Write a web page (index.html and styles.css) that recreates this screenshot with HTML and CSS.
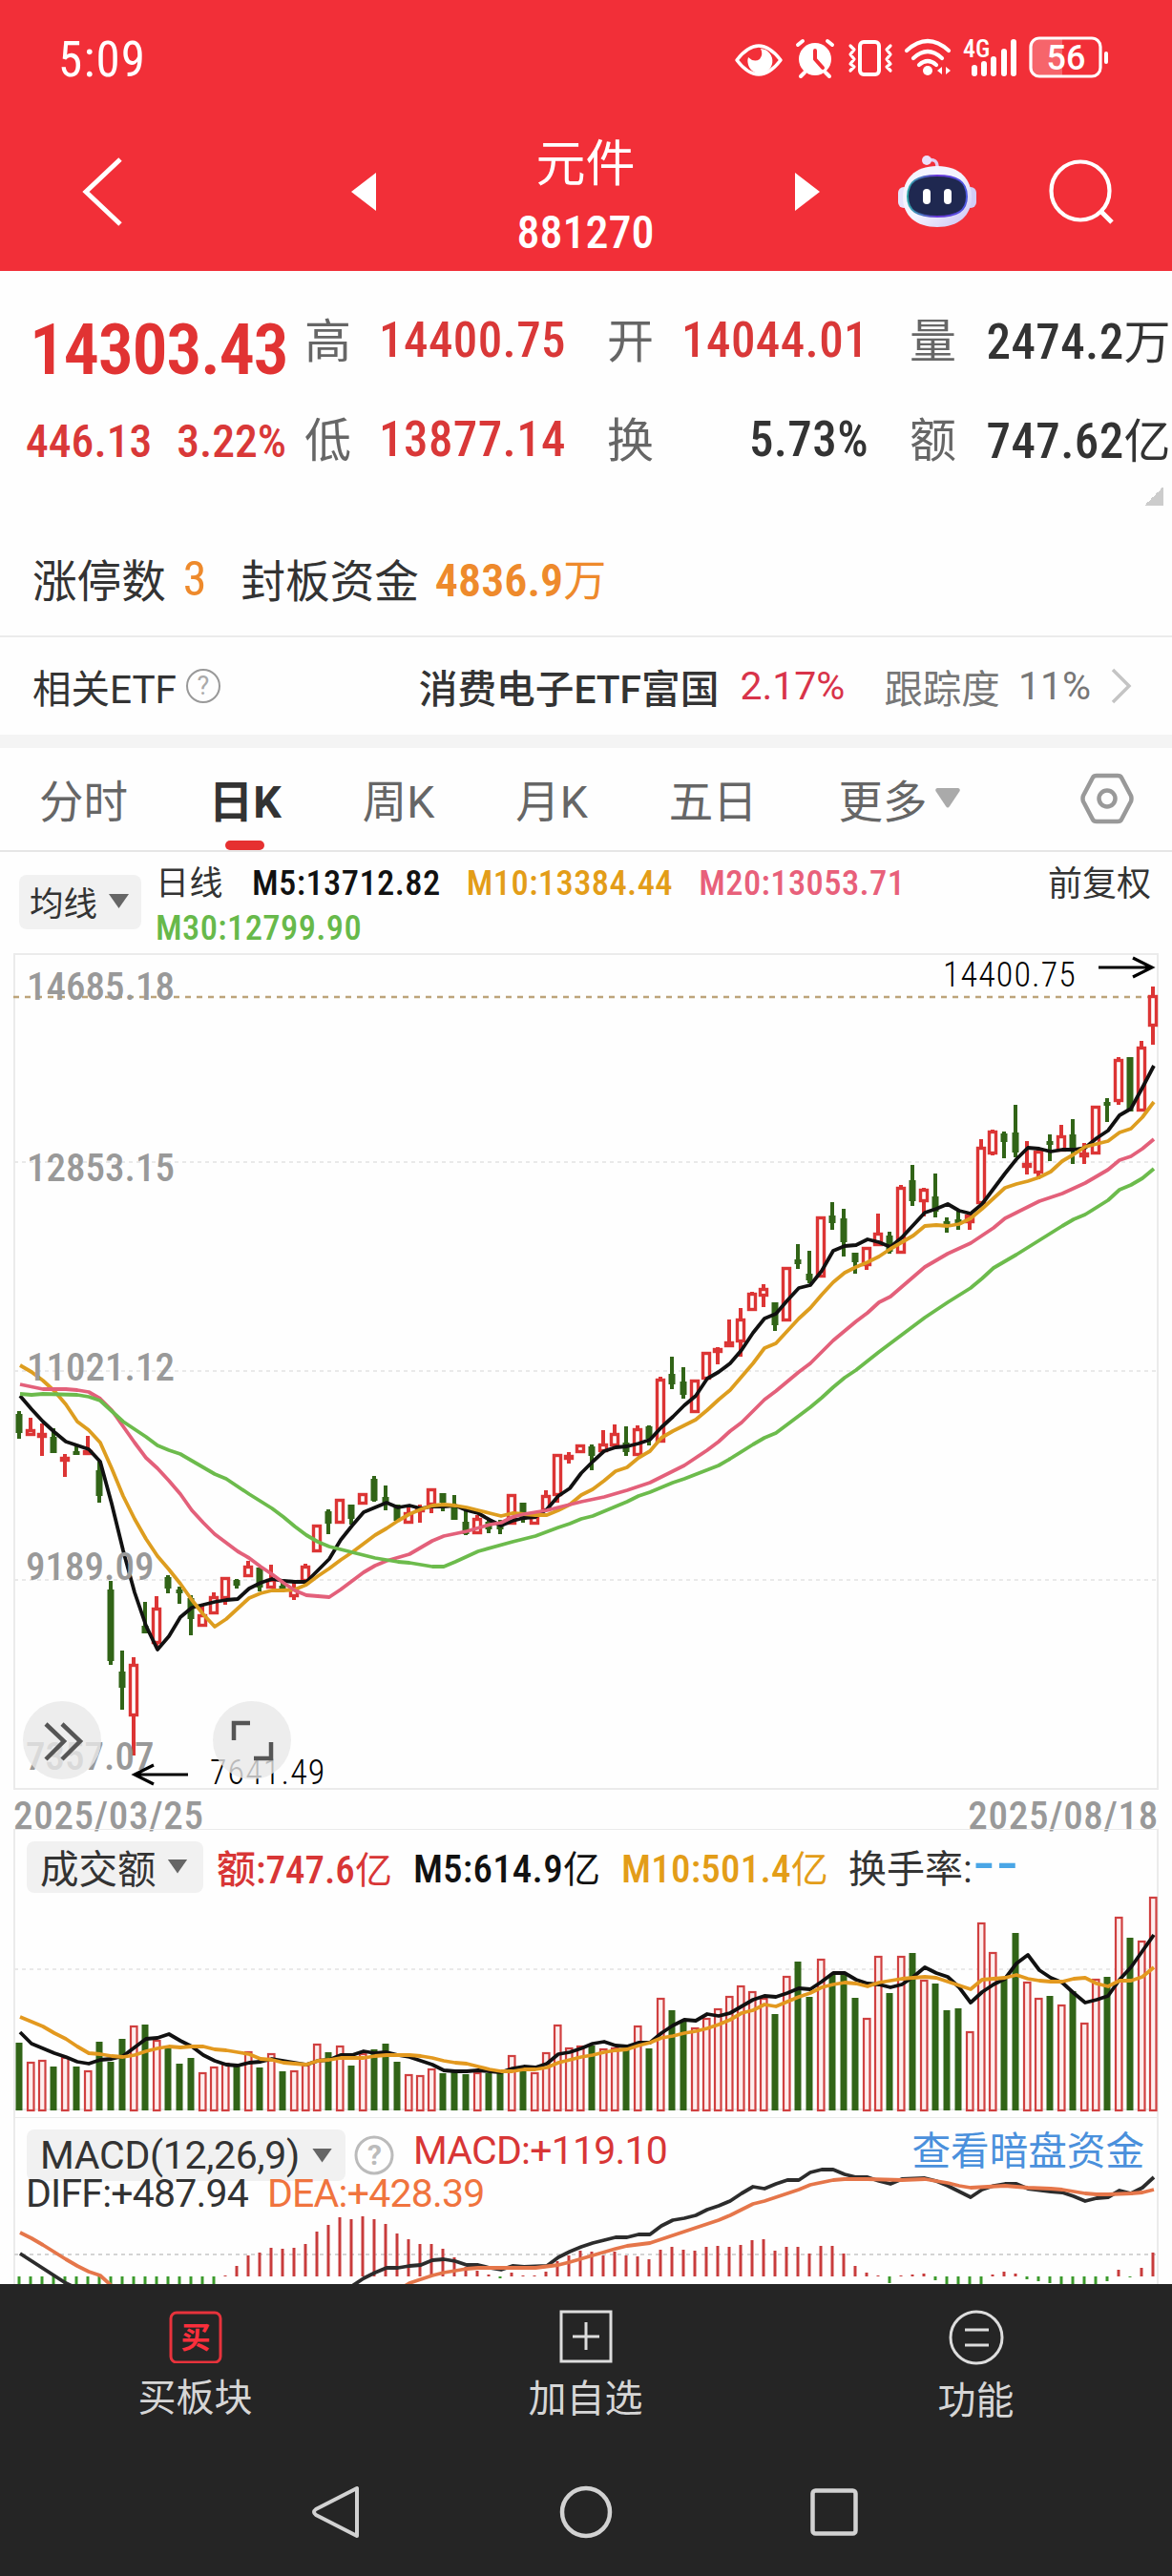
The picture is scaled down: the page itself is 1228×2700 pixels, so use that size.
FILE: index.html
```html
<!DOCTYPE html>
<html lang="zh-CN">
<head>
    <meta charset="UTF-8">
    <meta name="viewport" content="width=device-width, initial-scale=1.0">
    <title>元件 881270</title>
    <link rel="stylesheet" href="styles.css">
</head>
<body>
    <header class="top">
        <div class="status">
            <span class="clock">5:09</span>
            <svg class="status-icons" width="400" height="50" viewBox="0 0 400 50" fill="none" stroke="#fff" stroke-linecap="round" stroke-linejoin="round">
                <path d="M2 23Q25 -7 48 23Q25 53 2 23Z" transform="translate(0 1)" stroke-width="3.5"/>
                <path d="M27 12A13 13 0 1 1 14 21Q20 27 26 23Q30 18 27 12Z" fill="#fff" stroke="none"/>
                <circle cx="84" cy="23" r="17" fill="#fff" stroke="none"/>
                <path d="M66 8l5 -4M102 8l-5 -4M73 37l-4 4M95 37l4 4" stroke-width="4"/>
                <path d="M84 14v9l8 9" stroke="#f22f38" stroke-width="4"/>
                <rect x="131" y="5" width="20" height="34" rx="4" stroke-width="4"/>
                <path d="M121 9l4 4l-4 5l4 5l-4 5l4 3l-4 4M163 9l-4 4l4 5l-4 5l4 5l-4 3l4 4" stroke-width="3.2"/>
                <path d="M180 14Q202 -6 224 14M187 22Q202 8 217 22M193 29Q202 21 211 29" stroke-width="4.2"/>
                <circle cx="202" cy="35" r="5" fill="#fff" stroke="none"/>
                <path d="M217 31v8l-5 -4zM221 39v-8l5 4z" fill="#fff" stroke="none"/>
                <path d="M251 32v6M261 28v10M271 23v15M282 15v23M292 5v33" stroke-width="6"/>
                <text x="239" y="21" class="net">4G</text>
                <path d="M320 2h23v38h-23a9 9 0 0 1-9-9v-20a9 9 0 0 1 9-9z" fill="#f6656b" stroke="none"/>
                <rect x="310" y="1" width="73" height="40" rx="9" stroke-width="3.2"/>
                <path d="M389 17v9" stroke-width="4"/>
                <text x="347" y="34" text-anchor="middle" class="battery">56</text>
            </svg>
        </div>
        <div class="nav">
            <svg class="back" width="46" height="76" viewBox="0 0 46 76" fill="none" stroke="#fff" stroke-width="5"><path d="M42 4L6 38L42 72"/></svg>
            <svg class="prev" width="26" height="40" viewBox="0 0 26 40"><path d="M26 0V40L0 20Z" fill="#fff"/></svg>
            <div class="title">
                <h1>元件</h1>
                <span>881270</span>
            </div>
            <svg class="next" width="26" height="40" viewBox="0 0 26 40"><path d="M0 0V40L26 20Z" fill="#fff"/></svg>
            <svg class="robot" width="82" height="76" viewBox="0 0 82 76">
                <defs>
                    <linearGradient id="shell" x1="0" y1="0" x2="1" y2="1">
                        <stop offset="0" stop-color="#f3f5ff"/><stop offset=".5" stop-color="#f5f3ff"/><stop offset="1" stop-color="#c9c2f3"/>
                    </linearGradient>
                    <linearGradient id="rim" x1="0" y1="0" x2="1" y2="0">
                        <stop offset="0" stop-color="#2fa7a8"/><stop offset=".5" stop-color="#6a35d8"/><stop offset="1" stop-color="#4b58e0"/>
                    </linearGradient>
                </defs>
                <path d="M30 5Q42 2 41 14" fill="none" stroke="#e4cdf0" stroke-width="3.5"/>
                <circle cx="30" cy="5" r="5" fill="#ece0fa"/>
                <rect x="0" y="33" width="12" height="22" rx="6" fill="#e6e3fb"/>
                <rect x="70" y="33" width="12" height="22" rx="6" fill="#d2cdf6"/>
                <path d="M41 11C65 11 77 25 77 44C77 63 63 75 41 75C19 75 5 63 5 44C5 25 17 11 41 11Z" fill="url(#shell)"/>
                <path d="M41 21C62 21 72 27 72 43C72 58 62 64 41 64C20 64 10 58 10 43C10 27 20 21 41 21Z" fill="#1f2850" stroke="url(#rim)" stroke-width="2"/>
                <rect x="26" y="35" width="8" height="16" rx="4" fill="#fff"/>
                <rect x="48" y="35" width="8" height="16" rx="4" fill="#fff"/>
            </svg>
            <svg class="search" width="70" height="70" viewBox="0 0 70 70" fill="none" stroke="#fff" stroke-width="4.2"><circle cx="33" cy="34" r="30.5"/><path d="M54 55L66 67" stroke-width="5"/></svg>
        </div>
    </header>

    <section class="quote">
        <div class="price">14303.43</div>
        <div class="pair"><label>高</label><b class="up">14400.75</b></div>
        <div class="pair"><label>开</label><b class="up">14044.01</b></div>
        <div class="pair"><label>量</label><b>2474.2<i>万</i></b></div>
        <div class="change"><span>446.13</span><span>3.22%</span></div>
        <div class="pair"><label>低</label><b class="up">13877.14</b></div>
        <div class="pair"><label>换</label><b>5.73%</b></div>
        <div class="pair"><label>额</label><b>747.62<i>亿</i></b></div>
    </section>
    <div class="fold"></div>

    <section class="limit">
        <span>涨停数</span><span class="limit-count">3</span>
        <span>封板资金</span><span class="limit-money">4836.9<i>万</i></span>
    </section>

    <section class="etf">
        <span class="etf-title">相关ETF</span>
        <svg class="help" width="38" height="38" viewBox="0 0 38 38"><circle cx="19" cy="19" r="17" fill="none" stroke="#999" stroke-width="2"/><text x="19" y="28" text-anchor="middle">?</text></svg>
        <span class="etf-name">消费电子ETF富国</span>
        <span class="etf-rate">2.17%</span>
        <span class="etf-track">跟踪度</span>
        <span class="etf-pct">11%</span>
        <svg class="more" width="22" height="38" viewBox="0 0 22 38" fill="none" stroke="#c4c4c4" stroke-width="3.5"><path d="M2 2L19 19L2 36"/></svg>
    </section>

    <nav class="tabs">
        <span>分时</span>
        <span class="active">日K</span>
        <span>周K</span>
        <span>月K</span>
        <span>五日</span>
        <span class="tab-more">更多<svg width="26" height="21" viewBox="0 0 26 21"><path d="M2 0H24Q27 1 25 4L15 19Q13 22 11 19L1 4Q-1 1 2 0Z" fill="#aaa"/></svg></span>
        <svg class="settings" width="56" height="54" viewBox="0 0 56 54" fill="none" stroke="#999" stroke-width="4.5" stroke-linejoin="round"><path d="M17 3H39Q42 3 43 5L53 24Q54 27 53 30L43 49Q42 51 39 51H17Q14 51 13 49L3 30Q2 27 3 24L13 5Q14 3 17 3Z"/><circle cx="28" cy="27" r="8.5"/></svg>
    </nav>

    <section class="ma">
        <button class="pick pick-ma">均线<i class="caret"></i></button>
        <div class="ma-list">
            <span class="ma-name">日线</span>
            <span class="m5">M5:13712.82</span>
            <span class="m10">M10:13384.44</span>
            <span class="m20">M20:13053.71</span>
            <span class="m30">M30:12799.90</span>
        </div>
        <span class="adjust">前复权</span>
    </section>

    <section class="kline">
        <svg id="kline" width="1228" height="876" viewBox="0 0 1228 876">
            <rect x="15" y="0" width="1198" height="875" fill="none" stroke="#ebebeb" stroke-width="2"/>
            <path class="grid" d="M15 218H1212M15 437H1212M15 656H1212"/>
            <path class="last" d="M14 45H1204"/>
            <g class="lines"></g>
            <g class="axis">
                <text x="28" y="48">14685.18</text>
                <text x="28" y="238">12853.15</text>
                <text x="28" y="447">11021.12</text>
                <text x="27" y="656">9189.09</text>
                <text x="27" y="855">7357.07</text>
            </g>
            <g class="mark">
                <path d="M1151 14H1207M1187 4L1207 14L1187 24"/>
                <text x="988" y="34">14400.75</text>
                <path d="M197 860H141M161 850L141 860L161 870"/>
                <text x="220" y="870">7641.49</text>
            </g>
        </svg>
        <svg class="float expand" width="82" height="82" viewBox="0 0 82 82"><circle cx="41" cy="41" r="41"/><path d="M24 24L43 42L24 61M41 24L60 42L41 61"/></svg>
        <svg class="float full" width="82" height="82" viewBox="0 0 82 82"><circle cx="41" cy="41" r="41"/><path d="M22 41V23H39M43 60H61V43"/></svg>
    </section>
    <div class="dates"><span>2025/03/25</span><span>2025/08/18</span></div>

    <section class="volume">
        <svg id="volume" width="1228" height="302" viewBox="0 0 1228 302">
            <path d="M15 302V0H1213V302M15 294H1213" fill="none" stroke="#ebebeb" stroke-width="2"/>
            <path class="grid" d="M15 147H1212"/>
            <g class="lines"></g>
        </svg>
        <div class="panel-head">
            <button class="pick pick-vol">成交额<i class="caret"></i></button>
            <span class="amount">额:747.6<i>亿</i></span>
            <span class="m5">M5:614.9<i>亿</i></span>
            <span class="m10">M10:501.4<i>亿</i></span>
            <span class="turnover">换手率:</span><span class="dash">--</span>
        </div>
    </section>

    <section class="macd">
        <svg id="macd" width="1228" height="175" viewBox="0 0 1228 175">
            <path d="M15 176V0H1213V176" fill="none" stroke="#ebebeb" stroke-width="2"/>
            <path class="grid grid-dark" d="M15 144H1212"/>
            <g class="lines"></g>
        </svg>
        <div class="macd-head">
            <button class="pick pick-macd">MACD(12,26,9)<i class="caret"></i></button>
            <svg class="help help-bold" width="42" height="42" viewBox="0 0 42 42"><circle cx="21" cy="21" r="19" fill="none" stroke="#bbb" stroke-width="3"/><text x="21" y="31" text-anchor="middle">?</text></svg>
            <span class="macd-val">MACD:+119.10</span>
            <a class="dark-pool">查看暗盘资金</a>
        </div>
        <div class="macd-sub"><span class="diff">DIFF:+487.94</span><span class="dea">DEA:+428.39</span></div>
    </section>

    <footer class="bottom">
        <div class="actions">
            <div class="action">
                <svg width="56" height="56" viewBox="0 0 56 56"><rect x="2" y="3" width="52" height="52" rx="6" fill="none" stroke="#e8333c" stroke-width="3"/><text x="28" y="40" text-anchor="middle" class="buy">买</text></svg>
                <span class="buy-label">买板块</span>
            </div>
            <div class="action">
                <svg width="56" height="56" viewBox="0 0 56 56" fill="none" stroke="#ddd" stroke-width="3"><path d="M2 2H54V54H2ZM28 13V42M14 28H42"/></svg>
                <span>加自选</span>
            </div>
            <div class="action">
                <svg width="58" height="58" viewBox="0 0 58 58" fill="none" stroke="#ddd" stroke-width="3"><circle cx="29" cy="29" r="27"/><path d="M17 21H42M17 37H42"/></svg>
                <span>功能</span>
            </div>
        </div>
        <div class="system">
            <svg width="52" height="58" viewBox="0 0 52 58" fill="none" stroke="#d2d2d2" stroke-width="4" stroke-linejoin="round"><path d="M47 4V54L4 32Q0 29 4 26Z"/></svg>
            <svg width="56" height="56" viewBox="0 0 56 56" fill="none" stroke="#d2d2d2" stroke-width="4.5"><circle cx="28" cy="28" r="25"/></svg>
            <svg width="50" height="50" viewBox="0 0 50 50" fill="none" stroke="#d2d2d2" stroke-width="4.5"><rect x="2.5" y="2.5" width="45" height="45" rx="3"/></svg>
        </div>
    </footer>

    <script src="chart.js"></script>
</body>
</html>
```
FILE: chart.js
```js
const STEP = 12;
const START = 20;
const RED = '#dc3535';
const GREEN = '#316417';

// r/g, high, body top, body bottom, low
const candles = `g 479 482 502 508|r 486 498 505 505|r 492 502 507 526|g 497 506 523 523|r 524 527 532 548|g 515 521 524 525|r 505 520 525 525|g 532 541 568 575|g 657 666 741 745|g 730 752 769 792
r 737 744 799 840|g 679 704 712 712|r 673 685 723 725|g 651 653 665 670|g 663 666 670 681|g 672 675 697 714|r 683 692 705 705|r 669 673 692 692|r 653 653 676 682|g 655 656 662 665
r 636 641 653 653|g 643 643 664 668|r 640 655 665 665|g 658 662 668 668|r 657 664 674 677|r 639 641 658 658|r 598 598 627 627|g 582 584 597 608|r 571 571 597 597|g 577 577 592 598
r 565 565 577 577|g 547 550 573 574|g 557 569 575 583|g 577 577 594 594|r 578 585 597 597|r 577 580 585 596|r 560 560 578 586|g 565 565 575 584|g 567 577 593 593|g 583 595 608 609
r 588 591 608 608|g 593 595 603 607|g 593 598 603 608|r 566 566 598 598|g 575 575 593 596|r 588 589 598 598|r 562 567 584 584|r 524 524 568 575|r 522 525 529 534|r 514 514 523 523
g 514 516 526 541|r 499 513 522 522|r 493 502 516 516|g 495 512 522 526|r 494 497 526 526|g 494 495 508 515|r 443 445 512 512|g 422 440 451 456|g 433 448 462 466|r 446 446 481 481
r 417 417 446 446|r 412 413 417 430|r 383 406 412 412|r 371 382 407 422|r 354 355 374 374|r 346 350 359 370|g 365 365 389 395|r 328 328 385 385|g 304 320 325 330|g 311 335 342 345
r 275 275 339 339|g 260 274 282 289|g 267 277 302 317|g 313 313 323 335|r 307 307 327 331|r 272 292 306 306|g 291 295 312 314|r 242 244 314 314|g 221 237 259 264|r 245 246 260 275
g 230 254 270 276|g 276 280 283 292|g 268 278 281 289|r 272 273 282 289|r 194 202 262 262|r 184 185 210 211|g 186 188 197 214|g 158 187 208 213|r 196 219 223 231|r 205 206 230 236
g 189 196 200 217|r 179 190 207 207|g 173 189 206 220|r 198 208 212 220|r 159 159 210 210|g 151 155 158 176|r 108 110 155 158|g 108 108 165 165|r 91 97 165 165|r 34 43 76 95`
    .split(/[|\n]/).map(row => row.split(' '));

const ma5 = [463,477,490,501,511,515,519,532,576,625,669,704,729,715,695,685,682,679,677,676,665,659,655,657,658,658,646,634,614,599,585,580,575,580,578,581,579,579,578,583,586,593,599,594,591,590,582,568,560,544,532,521,517,516,513,509,496,485,473,463,445,438,429,415,397,382,377,363,350,347,332,311,306,305,299,302,307,297,284,271,267,262,269,272,262,246,230,215,203,204,207,205,205,203,193,185,169,162,140,117];
const ma10 = [431,438,447,458,472,490,499,512,539,568,592,613,631,645,660,677,692,705,697,686,675,670,667,667,666,661,652,644,635,627,618,609,602,594,587,582,578,577,578,580,583,586,589,586,587,588,588,583,577,567,561,552,542,538,528,521,507,500,494,488,478,467,457,443,429,413,408,395,382,371,357,344,334,328,323,317,309,302,295,285,284,285,283,277,267,256,245,241,238,234,228,217,210,202,199,196,187,183,171,155];
// slower averages are nearly straight between these [index, y] points
const ma20 = [[0,451],[2,456],[4,456],[5,457],[6,459],[7,466],[8,478],[9,495],[10,512],[11,528],[12,539],[13,552],[14,566],[15,583],[16,596],[17,608],[18,617],[19,626],[20,633],[21,642],[22,650],[23,659],[24,667],[25,672],[26,673],[27,674],[28,666],[29,657],[30,648],[31,641],[32,636],[34,629],[36,615],[37,610],[39,605],[41,598],[42,596],[43,590],[44,587],[46,583],[48,577],[49,574],[51,569],[53,562],[55,554],[57,542],[58,536],[59,528],[60,520],[61,511],[62,500],[63,491],[64,479],[65,467],[66,458],[67,448],[68,438],[69,429],[70,417],[71,405],[73,385],[74,376],[75,365],[76,359],[79,328],[81,314],[83,303],[85,287],[86,277],[87,271],[89,259],[91,251],[93,240],[95,226],[96,216],[97,212],[98,204],[99,194]];
const ma30 = [[0,461],[1,462],[2,461],[5,462],[6,464],[7,468],[8,479],[9,490],[10,498],[11,506],[12,515],[13,520],[14,524],[17,545],[18,550],[20,566],[22,581],[23,590],[24,600],[25,609],[26,616],[27,621],[29,627],[31,633],[33,637],[34,638],[36,642],[37,642],[38,637],[40,626],[43,616],[45,610],[47,601],[48,597],[49,592],[50,589],[52,579],[53,574],[54,568],[55,564],[57,554],[58,550],[61,536],[62,529],[64,514],[65,507],[66,502],[69,475],[70,465],[71,454],[72,444],[73,436],[75,417],[77,399],[79,381],[81,365],[83,350],[84,340],[85,329],[87,315],[89,300],[91,285],[92,278],[93,273],[95,258],[96,247],[97,242],[98,235],[99,225]];

const vol = [71,51,53,46,56,46,42,72,51,75,89,90,74,66,49,55,40,46,50,48,62,45,60,41,42,48,70,61,68,47,60,64,70,51,38,37,44,39,40,38,40,39,40,58,42,40,61,90,66,68,68,65,66,65,89,65,118,105,94,87,97,107,120,131,125,118,101,141,156,119,159,142,144,118,97,162,123,162,165,137,133,105,107,83,197,166,138,186,135,118,120,111,125,92,138,140,203,181,178,224];
const vol5 = [82,70,65,60,56,51,49,53,54,57,66,75,76,80,73,67,58,52,48,47,50,51,54,52,50,48,52,53,58,58,62,60,61,58,56,52,48,42,41,41,42,41,40,44,46,45,49,59,61,65,70,72,68,67,71,71,81,89,95,94,101,99,102,109,116,120,119,123,128,127,135,144,144,137,133,132,129,132,140,150,144,140,129,113,124,132,138,154,163,147,139,134,123,113,116,120,137,150,167,184];
const vol10 = [98,93,88,81,75,67,60,59,57,56,58,62,65,67,66,67,67,64,63,61,59,54,53,50,49,48,52,53,55,55,55,57,58,58,58,57,55,52,50,49,46,43,41,41,43,43,45,50,53,56,58,61,63,64,68,71,76,78,81,83,86,90,95,102,105,111,109,114,119,123,129,132,134,133,130,134,136,138,139,140,139,135,131,127,137,138,139,142,138,136,135,135,138,139,133,130,136,136,140,150];

const hist = [-12,-12,-12,-12,-12,-12,-12,-12,-12,-12,-12,-12,-12,-12,-12,-12,-12,-12,1,11,22,25,30,29,30,34,47,54,62,60,63,60,55,45,39,34,34,29,20,10,6,2,-2,4,1,1,5,16,22,27,26,22,26,22,21,18,28,31,28,27,31,32,31,33,38,39,27,31,31,24,32,32,24,11,4,1,-7,1,2,3,-4,-8,-8,-8,-8,2,5,3,-3,-5,-7,-8,-8,-8,-8,-5,7,-1,9,25];
const diff = [[0,24],[4,-7],[8,-30],[27,-30],[29,-10],[30,-2],[31,4],[32,9],[33,9],[34,11],[35,12],[36,17],[37,18],[38,16],[39,12],[40,12],[41,9],[42,7],[43,11],[44,10],[46,11],[47,20],[48,26],[49,31],[50,35],[51,38],[52,41],[53,41],[54,44],[55,44],[56,53],[57,59],[58,61],[59,64],[60,70],[61,74],[62,79],[63,87],[64,94],[65,92],[66,97],[67,101],[68,101],[69,109],[70,112],[71,112],[72,107],[73,104],[74,104],[75,100],[76,97],[77,102],[79,103],[80,100],[81,95],[82,89],[83,83],[84,91],[85,95],[86,97],[87,97],[88,92],[90,89],[91,88],[92,84],[93,79],[94,82],[95,83],[96,90],[97,87],[98,93],[99,104]];
const dea = [[0,46],[1,40],[2,33],[4,18],[5,11],[6,5],[7,1],[8,-10],[10,-30],[31,-30],[34,-7],[35,-3],[36,1],[37,4],[38,6],[39,8],[40,9],[45,9],[47,12],[48,15],[50,22],[52,29],[53,32],[55,35],[57,43],[59,51],[61,59],[62,64],[63,70],[64,76],[65,79],[67,87],[68,91],[69,96],[71,101],[72,102],[74,102],[77,101],[79,102],[80,100],[81,98],[82,95],[83,93],[86,95],[88,93],[90,92],[91,91],[92,89],[93,87],[94,86],[95,86],[97,87],[98,88],[99,91]];

function x(i) {
    return START + i * STEP;
}

function line(data, color, base) {
    const points = data
        .map((d, i) => Array.isArray(d) ? d : [i, d])
        .map(([i, v]) => `${x(i) + 1},${base === undefined ? v : base - v}`)
        .join(' ');
    return `<polyline points="${points}" fill="none" stroke="${color}" stroke-width="3.8" stroke-linejoin="round"/>`;
}

function candle([type, high, top, bottom, low], i) {
    const color = type === 'r' ? RED : GREEN;
    const cx = x(i);
    const h = Math.max(bottom - top, 4);
    let out = `<path d="M${cx} ${high}V${top}M${cx} ${bottom}V${low}" stroke="${color}" stroke-width="4"/>`;
    if (type === 'r') {
        out += `<rect x="${cx - 3.5}" y="${+top + 1.5}" width="7" height="${Math.max(h - 3, 2)}" fill="#fff" stroke="${color}" stroke-width="3.4"/>`;
    } else {
        out += `<rect x="${cx - 3.5}" y="${top}" width="7" height="${h}" fill="${color}"/>`;
    }
    return out;
}

function volBar(v, i) {
    if (candles[i][0] === 'r') {
        return `<rect x="${x(i) - 3}" y="${296 - v}" width="6.5" height="${v - 1}" fill="#fdeeee" stroke="#d04040" stroke-width="2.2"/>`;
    }
    return `<rect x="${x(i) - 3.5}" y="${295 - v}" width="7" height="${v}" fill="${GREEN}"/>`;
}

function histBar(v, i) {
    return `<path d="M${x(i)} 167V${167 - v}" stroke="${v > 0 ? '#c83c3c' : '#3c9a2c'}" stroke-width="3"/>`;
}

function draw(id, html) {
    document.querySelector(`#${id} .lines`).innerHTML = html;
}

draw('kline', candles.map(candle).join('') + line(ma5, '#111') + line(ma10, '#dd9d1f') + line(ma20, '#e3607a') + line(ma30, '#6cbb4c'));
draw('volume', vol.map(volBar).join('') + line(vol5, '#111', 295) + line(vol10, '#e3991f', 295));
draw('macd', hist.map(histBar).join('') + line(diff, '#2c2c2c', 167) + line(dea, '#e5764a', 167));
```
FILE: styles.css
```css
* {
    box-sizing: border-box;
}

body {
    margin: 0;
    width: 1228px;
    height: 2700px;
    overflow: hidden;
    background: #fefefe;
    color: #333;
    font-family: Roboto, 'Noto Sans CJK SC', sans-serif;
    font-stretch: condensed;
}

svg {
    display: block;
    flex-shrink: 0;
}

i {
    font-style: normal;
    font-weight: 400;
}

.top {
    height: 284px;
    background: #f22f38;
    color: #fff;
}

.status {
    display: flex;
    justify-content: space-between;
    height: 124px;
    padding: 39px 58px 0 61px;
}

.clock {
    font-size: 51px;
    line-height: 47px;
    letter-spacing: 1.2px;
}

.status-icons {
    overflow: visible;
}

.net,
.battery {
    fill: #fff;
    stroke: none;
    font-size: 26px;
    font-weight: 500;
}

.battery {
    font-size: 36px;
    font-stretch: normal;
}

.nav {
    display: flex;
    align-items: center;
    padding-left: 84px;
    height: 154px;
}

.prev {
    margin-left: 238px;
}

.title {
    width: 439px;
    padding-top: 13px;
    text-align: center;
    line-height: 1;
}

.title h1 {
    margin: 0 0 21px;
    font-size: 52px;
    font-weight: 400;
}

.title span {
    display: block;
    font-size: 48px;
    font-weight: 500;
}

.robot {
    margin-left: 82px;
}

.search {
    margin-left: 76px;
}

.quote {
    display: grid;
    grid-template-columns: 319px 317px 317px 274px;
    grid-template-rows: 104px 104px;
    align-items: center;
    height: 222px;
    padding-top: 20px;
}

.price {
    padding: 22px 0 0 31px;
    color: #e13333;
    font-size: 74px;
    font-weight: 600;
    letter-spacing: -1.4px;
    line-height: 1;
}

.change {
    display: flex;
    gap: 26px;
    padding: 6px 0 0 27px;
    color: #d93838;
    font-size: 47.6px;
    font-weight: 500;
}

.pair {
    display: flex;
    justify-content: space-between;
    align-items: center;
    width: 274px;
    height: 60px;
    font-size: 51px;
    white-space: nowrap;
}

.pair label {
    padding-bottom: 6px;
    color: #666;
    font-size: 49px;
}

.pair b {
    font-weight: 500;
    letter-spacing: 0.4px;
}

.pair b:has(i) {
    margin-top: -3px;
}

.pair i {
    font-size: 49px;
}

.pair .up {
    color: #d93838;
}

.fold {
    width: 20px;
    height: 20px;
    margin: 4px 9px 0 auto;
    background: linear-gradient(135deg, transparent 50%, #ccc 50%);
}

.limit {
    display: flex;
    align-items: center;
    height: 138px;
    padding: 14px 0 0 34px;
    border-bottom: 2px solid #ebebeb;
    font-size: 46.6px;
}

.limit-count {
    margin: 4px 36px 0 18px;
    color: #ee8a2c;
    font-size: 50px;
}

.limit-money {
    margin-left: 17px;
    color: #ee8a2c;
    font-size: 48px;
    font-weight: 600;
}

.limit-money i {
    font-size: 45px;
}

.etf {
    display: flex;
    align-items: center;
    height: 116px;
    padding-left: 34px;
    border-bottom: 14px solid #f4f4f4;
    font-size: 40.5px;
    font-stretch: normal;
    white-space: nowrap;
}

.help {
    margin-left: 9px;
}

.help text {
    fill: #aaa;
    font-size: 27px;
}

.etf-name {
    margin-left: auto;
    font-weight: 500;
    font-size: 40.7px;
}

.etf-rate {
    margin-left: 22px;
    color: #d8334a;
    font-size: 41px;
}

.etf-track {
    margin-left: 41px;
    color: #777;
}

.etf-pct {
    margin-left: 19px;
    color: #777;
    font-size: 41px;
}

.more {
    margin: 0 42px 0 21px;
}

.tabs {
    display: flex;
    align-items: center;
    gap: 84.8px;
    height: 109px;
    padding: 0 0 2px 41px;
    border-bottom: 2px solid #e6e6e6;
    color: #666;
    font-size: 46.5px;
    font-stretch: normal;
}

.tabs .active {
    position: relative;
    color: #333;
    font-weight: 700;
}

.active::after {
    content: '';
    position: absolute;
    left: 17px;
    bottom: -21px;
    width: 41px;
    height: 10px;
    border-radius: 5px;
    background: #e63030;
}

.tab-more {
    display: flex;
    align-items: center;
    gap: 9px;
}

.settings {
    margin-left: auto;
    margin-right: 40px;
}

.ma {
    display: flex;
    height: 107px;
    padding-left: 20px;
    font-size: 36px;
}

.pick {
    display: flex;
    align-items: center;
    border: 0;
    border-radius: 8px;
    background: #f1f1f1;
    color: #333;
    font: inherit;
    white-space: nowrap;
}

.caret {
    width: 21px;
    height: 15px;
    background: #666;
    clip-path: polygon(0 0, 100% 0, 50% 100%);
}

.pick-ma {
    width: 128px;
    height: 57px;
    margin-top: 24px;
    padding: 0 0 2px 11px;
    gap: 12px;
    font-size: 35.5px;
}

.ma-list {
    width: 860px;
    padding: 10px 0 0 15px;
    line-height: 46px;
}

.ma-list span {
    margin-right: 19px;
    font-size: 36.5px;
    font-weight: 500;
    letter-spacing: 0.4px;
}

.ma-list .ma-name {
    margin-right: 22px;
    font-size: 35px;
    font-weight: 400;
}

.adjust {
    margin-left: auto;
    margin-right: 22px;
    padding-top: 11px;
    line-height: 46px;
}

.m5 {
    color: #111;
}

.m10 {
    color: #e39d18;
}

.m20 {
    color: #e8607a;
}

.m30 {
    color: #67b94a;
}

.kline {
    position: relative;
    height: 876px;
}

.volume > svg,
.macd > svg {
    overflow: hidden;
}

#kline {
    overflow: visible;
}

.grid {
    stroke: #e9e9e9;
    stroke-width: 2;
    stroke-dasharray: 4 4;
}

.grid-dark {
    stroke: #d4d4d4;
}

.last {
    stroke: #bda47a;
    stroke-width: 2.4;
    stroke-dasharray: 6 6;
}

.axis text {
    fill: #999;
    font-size: 41px;
    font-weight: 500;
}

.mark text {
    fill: #000;
    font-size: 36px;
    font-weight: 300;
    letter-spacing: 1.1px;
}

.mark path {
    fill: none;
    stroke: #000;
    stroke-width: 3.2;
}

.float {
    position: absolute;
    top: 783px;
    left: 24px;
}

.full {
    left: 223px;
}

.float circle {
    fill: rgba(232, 232, 232, 0.8);
}

.float path {
    fill: none;
    stroke: #555;
    stroke-width: 4.5;
}

.dates {
    display: flex;
    justify-content: space-between;
    height: 41px;
    padding: 7px 14px 0;
    color: #999;
    font-size: 41px;
    font-weight: 500;
    letter-spacing: 0.7px;
    line-height: 41px;
}

.volume {
    position: relative;
    height: 302px;
}

.panel-head,
.macd-head {
    position: absolute;
    top: 13px;
    left: 28px;
    right: 28px;
    display: flex;
    align-items: center;
    height: 54px;
    font-size: 41px;
    white-space: nowrap;
}

.panel-head span {
    margin-top: -2px;
    font-weight: 500;
}

.pick-vol {
    width: 185px;
    height: 54px;
    padding: 0 0 2px 14px;
    gap: 12px;
    font-size: 40.5px;
}

.amount {
    margin-left: 14px;
    color: #d83636;
}

.panel-head .m5,
.panel-head .m10 {
    margin-left: 22px;
}

.panel-head .m5,
.panel-head .m10 {
    letter-spacing: 0.2px;
}

.panel-head i {
    font-size: 39px;
}

.panel-head .turnover {
    margin-left: 21px;
    font-size: 40px;
    font-weight: 400;
}

.panel-head .dash {
    margin: -8px 0 0 3px;
    color: #4aa6e6;
    font-size: 70px;
    font-weight: 400;
    font-stretch: normal;
    letter-spacing: 5px;
    line-height: 54px;
}

.macd {
    position: relative;
    height: 175px;
    overflow: hidden;
}

.macd-head,
.macd-sub {
    font-stretch: normal;
    letter-spacing: -0.8px;
}

.pick-macd {
    width: 334px;
    height: 54px;
    padding: 0 0 0 14px;
    gap: 13px;
    font-size: 41px;
    letter-spacing: -0.3px;
}

.help-bold text {
    fill: #bbb;
    font-size: 30px;
    font-weight: 700;
}

.macd-val {
    margin: -11px 0 0 20px;
    color: #d83636;
}

.dark-pool {
    margin: -16px 1px 0 auto;
    color: #4a90dc;
    font-size: 40.6px;
    letter-spacing: 0;
}

.macd-sub {
    position: absolute;
    top: 60px;
    left: 27px;
    display: flex;
    gap: 20px;
    font-size: 41px;
    line-height: 41px;
}

.dea {
    color: #f0743e;
}

.bottom {
    height: 306px;
    background: #252525;
    color: #d6d6d6;
}

.actions {
    display: flex;
    height: 204px;
    padding: 27px 0 0;
}

.action {
    display: flex;
    flex-direction: column;
    align-items: center;
    width: 409px;
    height: 120px;
    gap: 8px;
    font-size: 40px;
}

.action span {
    line-height: 60px;
}

.action .buy-label {
    line-height: 57px;
}

.buy {
    fill: #fa2f3c;
    font-size: 31px;
    font-weight: 700;
}

.system {
    display: flex;
    align-items: center;
    gap: 207px;
    height: 70px;
    padding-left: 327px;
}
```
